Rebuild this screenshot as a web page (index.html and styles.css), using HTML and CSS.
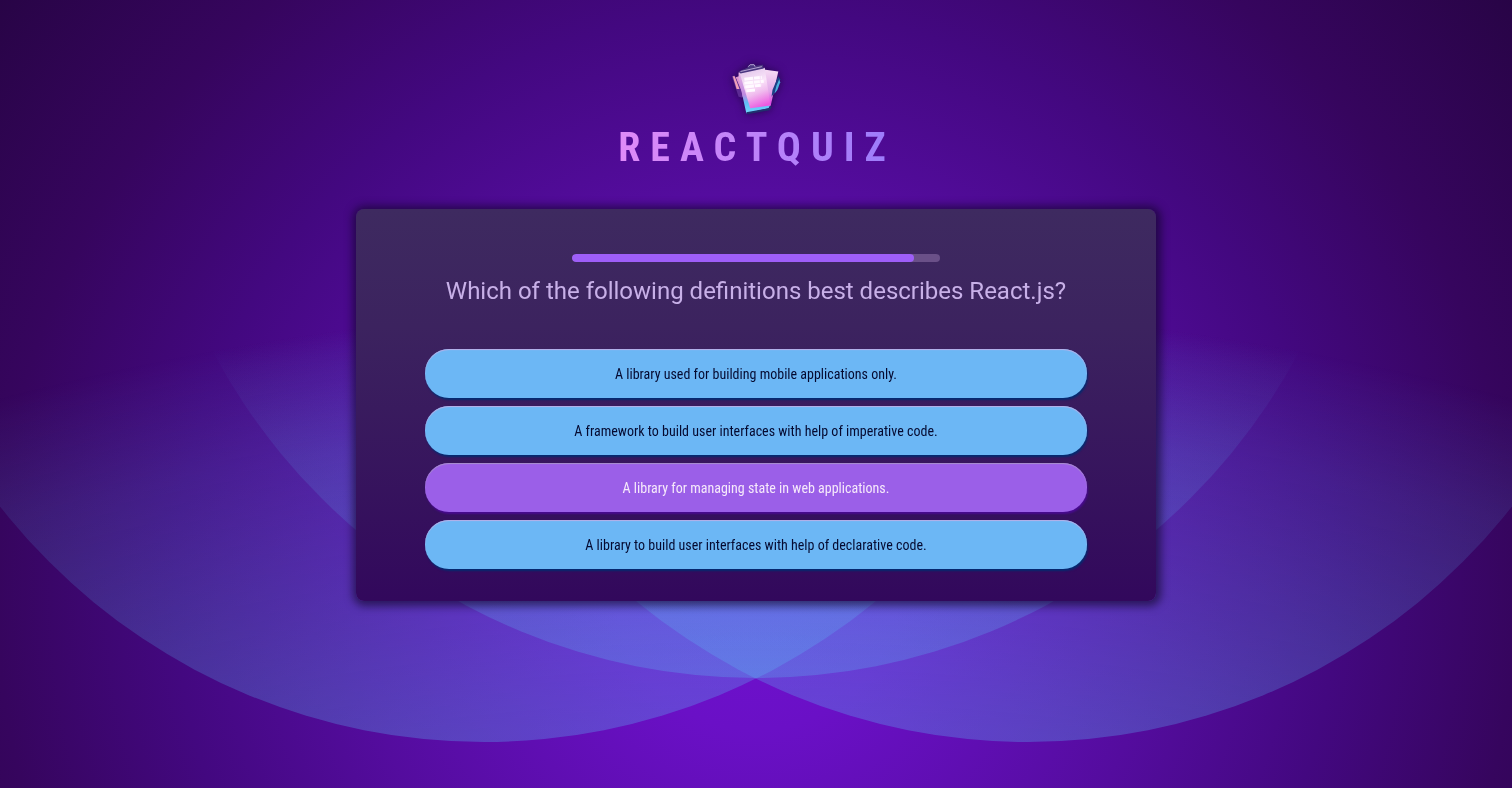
FILE: index.html
```html
<!DOCTYPE html>
<html lang="en">
<head>
<meta charset="utf-8">
<meta name="viewport" content="width=device-width, initial-scale=1">
<title>ReactQuiz</title>
<link rel="stylesheet" href="styles.css">
</head>
<body>
<svg class="backdrop" viewBox="0 0 1512 788" preserveAspectRatio="xMidYMid slice" aria-hidden="true">
  <defs>
    <radialGradient id="glow" gradientUnits="userSpaceOnUse" cx="756" cy="3300" r="3000">
      <stop offset="0.86" stop-color="#5cbcf6" stop-opacity="0.3"/>
      <stop offset="0.96" stop-color="#5cbcf6" stop-opacity="0.12"/>
      <stop offset="0.992" stop-color="#5cbcf6" stop-opacity="0.03"/>
      <stop offset="1" stop-color="#5cbcf6" stop-opacity="0"/>
    </radialGradient>
  </defs>
  <g fill="url(#glow)">
    <circle cx="484" cy="127" r="615"/>
    <circle cx="756" cy="63" r="615"/>
    <circle cx="1028" cy="127" r="615"/>
  </g>
</svg>
<header class="header">
  <svg class="logo" viewBox="0 0 64 64" role="img" aria-label="Quiz clipboard">
    <defs>
      <linearGradient id="sheet" x1="0.3" y1="0" x2="0.6" y2="1">
        <stop offset="0" stop-color="#e0c4ea"/>
        <stop offset="0.4" stop-color="#fbe6fa"/>
        <stop offset="0.65" stop-color="#f0bcee"/>
        <stop offset="1" stop-color="#ec58e0"/>
      </linearGradient>
      <linearGradient id="rear" x1="0" y1="0" x2="0" y2="1">
        <stop offset="0" stop-color="#f6dcf4"/>
        <stop offset="0.6" stop-color="#e0a6e8"/>
        <stop offset="1" stop-color="#e02fe0"/>
      </linearGradient>
      <linearGradient id="board" x1="0" y1="0" x2="0" y2="1">
        <stop offset="0" stop-color="#e8b4e4"/>
        <stop offset="0.55" stop-color="#c08ae0"/>
        <stop offset="0.75" stop-color="#62bcf6"/>
        <stop offset="1" stop-color="#70d8fc"/>
      </linearGradient>
    </defs>
    <path d="M11 22l6-2 6 24-5-2z" fill="#dc92cc"/>
    <path d="M7 21l3-1 8 18 0 5-4-1-3-9z" fill="#5c2a94"/>
    <path d="M8 21l2 0 5 13-3 0z" fill="#f0a0b8"/>
    <path d="M40 14l15 2-8 36-10-4z" fill="url(#rear)"/>
    <path d="M55 21l2 3-2 9-7 9 1-7z" fill="#1c3f86"/>
    <path d="M56 24l1 3-3 8-3 4 2-8z" fill="#4ab0de"/>
    <path d="M14 17l10-1 14 33 9 1-2 4-23 5-8-36z" fill="url(#board)"/>
    <path d="M15 17l26-5 6 39-21 3z" fill="url(#sheet)"/>
    <path d="M22 58l23-4 2-3 1 2-2 3-23 4z" fill="#20306e"/>
    <path d="M20 24l18-2M20 28l20-2M21 32l17-2M22 36l10-1" stroke="#fffaff" stroke-width="3" stroke-dasharray="9 1 6 1"/>
    <path d="M14 16l9-4 2-3 4-1 3 2 7-1 1 4-24 5z" fill="#49367f"/>
    <path d="M16 16l22-5M24 11l2-2 4 0 1 2" fill="none" stroke="#b9a4d6" stroke-width="1"/>
  </svg>
  <h1 class="brand">REACTQUIZ</h1>
</header>
<main class="quiz">
  <progress class="timer" value="93" max="100" aria-label="Time remaining"></progress>
  <h2 class="question">Which of the following definitions best describes React.js?</h2>
  <ul class="answers">
    <li><button class="answer" type="button">A library used for building mobile applications only.</button></li>
    <li><button class="answer" type="button">A framework to build user interfaces with help of imperative code.</button></li>
    <li><button class="answer selected" type="button">A library for managing state in web applications.</button></li>
    <li><button class="answer" type="button">A library to build user interfaces with help of declarative code.</button></li>
  </ul>
</main>
</body>
</html>
```

FILE: styles.css
```css
* {
  box-sizing: border-box;
}

html {
  min-height: 100%;
}

body {
  margin: 0;
  min-height: 100vh;
  padding: 56px 16px 32px;
  font-family: Roboto, "Liberation Sans", sans-serif;
  background: radial-gradient(circle at 50% 590px, #7011d0 0, #6a10c6 140px, #540c9e 400px, #430880 580px, #36055e 760px, #280446 960px) no-repeat #280446;
}

.backdrop {
  position: fixed;
  inset: 0;
  z-index: -1;
  width: 100%;
  height: 100%;
}

.header {
  display: flex;
  flex-direction: column;
  align-items: center;
}

.logo {
  width: 62px;
  height: 62px;
  filter: drop-shadow(0 0 4px rgba(20, 3, 50, 0.7));
}

.brand {
  margin: 0;
  padding-left: 2px;
  font-family: "Roboto Condensed", Roboto, sans-serif;
  font-size: 40px;
  font-weight: 700;
  line-height: 60px;
  letter-spacing: 10px;
  color: transparent;
  background: linear-gradient(90deg, #e08af8, #9a7cfb);
  background-clip: text;
}

.quiz {
  max-width: 800px;
  margin: 31px auto 0;
  padding: 45px 32px 32px;
  border-radius: 8px;
  background: linear-gradient(180deg, #3e2a60 0%, #3c235f 30%, #32085c 100%);
  box-shadow: 1px 1px 8px 4px rgba(12, 5, 32, 0.6);
  text-align: center;
}

.timer {
  display: block;
  width: 50%;
  height: 8px;
  margin: 0 auto;
  border: 0;
  border-radius: 8px;
  overflow: hidden;
  appearance: none;
  background: #6a5088;
}

.timer::-webkit-progress-bar {
  background: #6a5088;
}

.timer::-webkit-progress-value {
  border-radius: 8px;
  background: #9e5ef8;
}

.question {
  margin: 13px 0 42px;
  font-size: 24px;
  font-weight: 400;
  line-height: 32px;
  color: #c8b0e8;
}

.answers {
  display: flex;
  flex-direction: column;
  gap: 8px;
  width: 90%;
  margin: 0 auto;
  padding: 0;
  list-style: none;
}

.answer {
  display: block;
  width: 100%;
  padding: 17px 32px 15px;
  border: 0;
  border-radius: 24px;
  font-family: "Roboto Condensed", Roboto, sans-serif;
  font-size: 14px;
  line-height: 17px;
  color: #050a30;
  background: #6cb7f5;
  box-shadow: 1px 2px 2px #042a70, inset 0 1px 1px #b9b0e8;
}

.selected {
  color: #f6e9fb;
  background: #9b5fe8;
  box-shadow: 1px 2px 2px #480a90, inset 0 1px 1px #a890cc;
}
```
